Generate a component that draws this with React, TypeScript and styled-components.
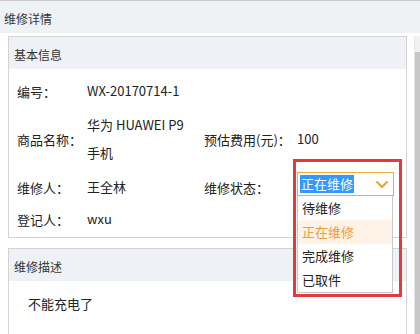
import styled, { createGlobalStyle } from 'styled-components';

const GlobalStyle = createGlobalStyle`
  html, body {
    margin: 0;
    padding: 0;
    background: #fff;
  }
  body {
    font-family: "Noto Sans CJK SC", "Microsoft YaHei", sans-serif;
    font-size: 13px;
    color: #222;
  }
`;

const Page = styled.div`
  width: 420px;
  height: 334px;
  display: flex;
  flex-direction: column;
  overflow: hidden;
`;

const TitleBar = styled.div`
  height: 32px;
  flex-shrink: 0;
  border-top: 1px solid #c9c9c9;
  background: #eef2f5;
  padding-left: 4px;
  font-size: 12px;
  line-height: 35px;
  color: #333;
`;

const Body = styled.div`
  flex: 1;
  min-height: 0;
  display: flex;
`;

const Content = styled.div`
  flex: 1;
  padding: 3px 7px 0 8px;
  display: flex;
  flex-direction: column;
  gap: 10px;
  overflow: hidden;
`;

const Rail = styled.div`
  width: 5px;
  margin-top: 3px;
  border-left: 1px solid #e6e6e6;
  display: flex;
  flex-direction: column;
`;

const RailButton = styled.div`
  height: 16px;
  background: #f1f1f1;
`;

const RailThumb = styled.div`
  flex: 1;
  background: #c6c6c6;
`;

const Panel = styled.div`
  border: 1px solid #d3d3d3;
  background: #fff;
  flex-shrink: 0;
`;

const PanelHeader = styled.div`
  height: 32px;
  background: #eef2f6;
  padding-left: 5px;
  font-size: 12px;
  line-height: 36px;
  color: #333;
`;

const InfoGrid = styled.div`
  display: grid;
  grid-template-columns: 70px 117px 93px 1fr;
  grid-template-rows: 32px 64px 32px 32px;
  align-items: center;
  padding: 6px 0 2px 8px;
`;

const Label = styled.div`
  color: #222;
  white-space: nowrap;
`;

const Value = styled.div`
  max-width: 110px;
  line-height: 28px;
  color: #222;
`;

const StatusCell = styled.div`
  position: relative;
  align-self: start;
  margin-top: 1px;
`;

const Select = styled.div`
  width: 97px;
  height: 24px;
  box-sizing: border-box;
  border: 1px solid #f5a742;
  background: #fff;
  display: flex;
  align-items: center;
  justify-content: space-between;
  padding: 0 4px 0 2px;
`;

const SelectedText = styled.span`
  background: #3399ff;
  color: #fff;
  line-height: 18px;
  padding: 0 1px;
`;

const OptionList = styled.div`
  position: absolute;
  top: 24px;
  left: 0;
  width: 96px;
  box-sizing: border-box;
  border: 1px solid #c8c8c8;
  border-top: none;
  background: #fff;
  z-index: 2;
`;

const Option = styled.div<{ $active?: boolean }>`
  height: 24px;
  line-height: 24px;
  padding-left: 4px;
  background: ${(p) => (p.$active ? '#fef3e6' : '#fff')};
  color: ${(p) => (p.$active ? '#f39a3c' : '#222')};
`;

const Highlight = styled.div`
  position: absolute;
  left: -4px;
  top: -13px;
  width: 109px;
  height: 138px;
  box-sizing: border-box;
  border: 3px solid #e53a3a;
  pointer-events: none;
  z-index: 3;
`;

const DescBody = styled.div`
  padding: 11px 0 0 19px;
  height: 60px;
  line-height: 24px;
  font-size: 13px;
  color: #222;
`;

const Chevron = () => (
  <svg width="14" height="9" viewBox="0 0 14 9">
    <polyline points="1.5,1.5 7,7 12.5,1.5" fill="none" stroke="#f0a030" strokeWidth="2" />
  </svg>
);

const statuses = ['待维修', '正在维修', '完成维修', '已取件'];

const App = () => {
  const current = '正在维修';

  return (
    <Page>
      <GlobalStyle />
      <TitleBar>维修详情</TitleBar>
      <Body>
        <Content>
          <Panel>
            <PanelHeader>基本信息</PanelHeader>
            <InfoGrid>
              <Label>编号：</Label>
              <Value>WX-20170714-1</Value>
              <div />
              <div />

              <Label>商品名称：</Label>
              <Value>华为 HUAWEI P9 手机</Value>
              <Label>预估费用(元)：</Label>
              <Value>100</Value>

              <Label>维修人：</Label>
              <Value>王全林</Value>
              <Label>维修状态：</Label>
              <StatusCell>
                <Select>
                  <SelectedText>{current}</SelectedText>
                  <Chevron />
                </Select>
                <OptionList>
                  {statuses.map((s) => (
                    <Option key={s} $active={s === current}>
                      {s}
                    </Option>
                  ))}
                </OptionList>
                <Highlight />
              </StatusCell>

              <Label>登记人：</Label>
              <Value>wxu</Value>
              <div />
              <div />
            </InfoGrid>
          </Panel>
          <Panel>
            <PanelHeader>维修描述</PanelHeader>
            <DescBody>不能充电了</DescBody>
          </Panel>
        </Content>
        <Rail>
          <RailButton />
          <RailThumb />
        </Rail>
      </Body>
    </Page>
  );
};

export default App;
